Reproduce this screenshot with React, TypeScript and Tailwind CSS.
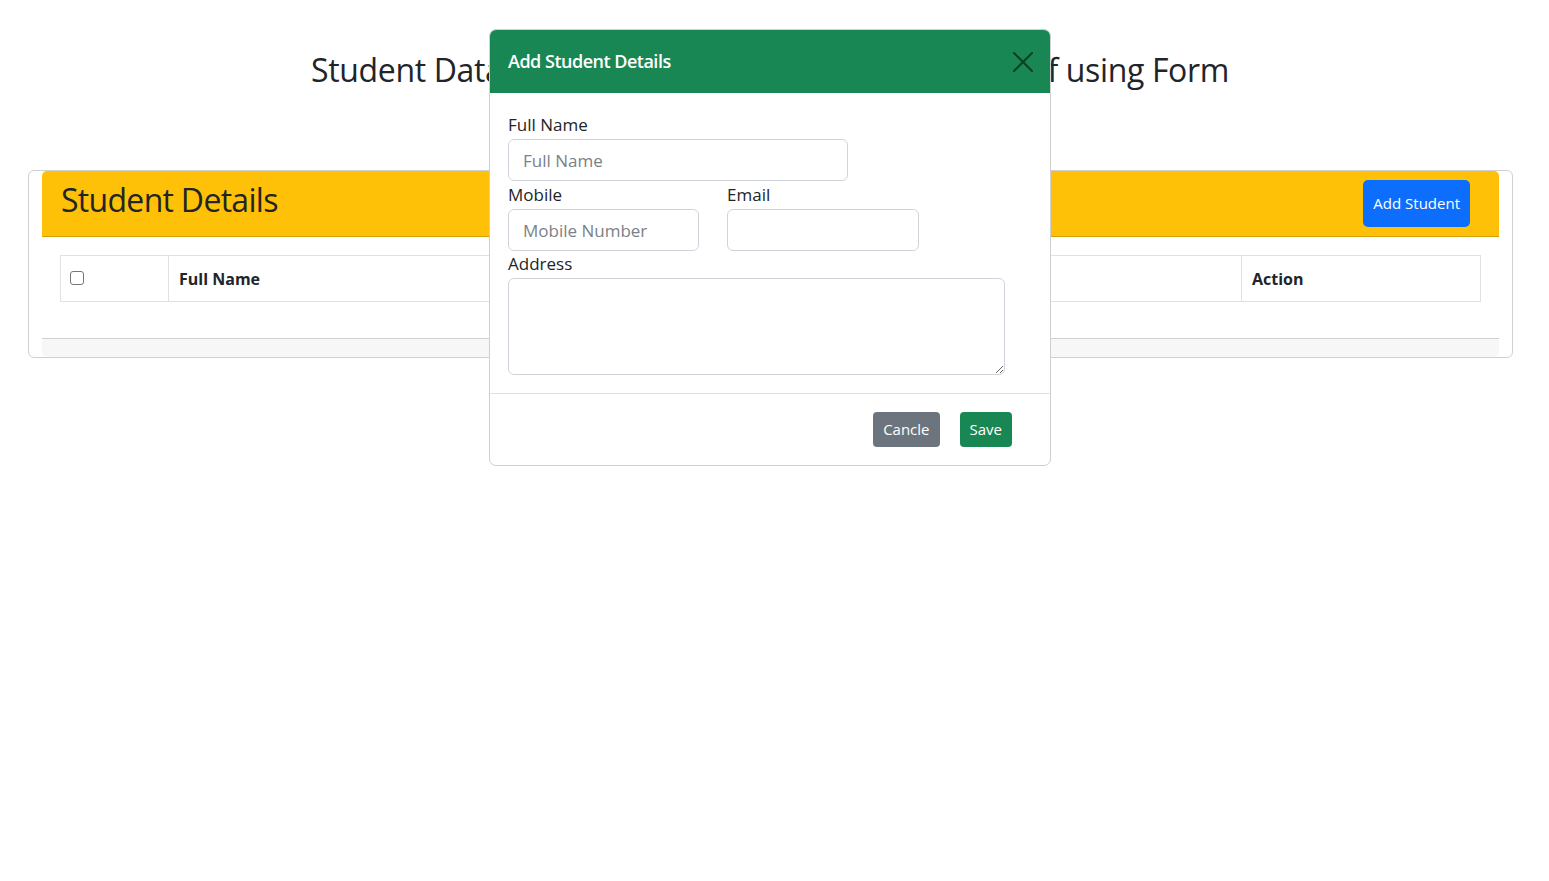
import React from "react";

const font = { fontFamily: '"Open Sans", "Noto Sans", sans-serif' };

function CloseIcon() {
  return (
    <svg width="20" height="20" viewBox="0 0 20 20" fill="none">
      <path d="M1 1L19 19M19 1L1 19" stroke="#0d3f27" strokeWidth="2" strokeLinecap="square" />
    </svg>
  );
}

function StudentTable() {
  const cols = [
    { label: "Full Name", w: "w-[372px]" },
    { label: "Mobile", w: "w-[180px]" },
    { label: "Email", w: "w-[160px]" },
    { label: "Address", w: "w-[361px]" },
    { label: "Action", w: "" },
  ];
  return (
    <table className="w-full table-fixed border-collapse">
      <thead>
        <tr className="h-[46px]">
          <th className="w-[108px] border border-[#dee2e6] px-[9px] text-left align-middle">
            <span className="block h-[14px] w-[14px] -translate-y-[1px] rounded-[3px] border border-[#767676] bg-white" />
          </th>
          {cols.map((c) => (
            <th
              key={c.label}
              className={`${c.w} border border-[#dee2e6] px-[10px] text-left text-[16px] font-bold text-[#212529]`}
            >
              {c.label}
            </th>
          ))}
        </tr>
      </thead>
    </table>
  );
}

function AddStudentModal() {
  return (
    <div className="absolute left-[489px] top-[29px] w-[562px] overflow-hidden rounded-[7px] border border-[#cfcfcf] bg-white">
      <div className="flex h-[63px] items-center justify-between bg-[#198754] pl-[18px] pr-[17px]">
        <h5 className="text-[18px] font-semibold tracking-[-0.5px] text-white">Add Student Details</h5>
        <button className="flex h-[20px] w-[20px] items-center justify-center">
          <CloseIcon />
        </button>
      </div>

      <div className="flex flex-col px-[18px] pb-[18px] pt-[20px] text-[17px] text-[#212529]">
        <label className="leading-[24px]">Full Name</label>
        <input
          placeholder="Full Name"
          className="mt-[2px] h-[42px] w-[340px] rounded-[6px] border border-[#ced4da] px-[14px] text-[17px] placeholder:text-[#7b8188]"
        />
        <div className="mt-[2px] flex gap-[28px]">
          <div className="flex flex-col">
            <label className="leading-[24px]">Mobile</label>
            <input
              placeholder="Mobile Number"
              className="mt-[2px] h-[42px] w-[191px] rounded-[6px] border border-[#ced4da] px-[14px] text-[17px] placeholder:text-[#7b8188]"
            />
          </div>
          <div className="flex flex-col">
            <label className="leading-[24px]">Email</label>
            <input className="mt-[2px] h-[42px] w-[192px] rounded-[6px] border border-[#ced4da] px-[14px] text-[17px]" />
          </div>
        </div>
        <label className="mt-[1px] leading-[24px]">Address</label>
        <textarea className="mt-[2px] block h-[97px] w-[497px] rounded-[6px] border border-[#ced4da] px-[14px] py-[6px]" />
      </div>

      <div className="flex justify-end gap-[20px] border-t border-[#dee2e6] pb-[18px] pr-[38px] pt-[18px]">
        <button className="h-[35px] rounded-[4px] bg-[#6c757d] px-[10px] text-[15px] text-white">Cancle</button>
        <button className="h-[35px] rounded-[4px] bg-[#198754] px-[10px] text-[15px] text-white">Save</button>
      </div>
    </div>
  );
}

export default function App() {
  return (
    <div className="relative min-h-[881px] bg-white text-[#212529]" style={font}>
      <h2 className="pr-[9px] pt-[50px] text-center text-[32px] font-medium leading-[40px] tracking-[-0.35px]">
        Student Data Add, Update, Delete, Show in Table of using Form
      </h2>

      <div className="ml-[28px] mt-[80px] w-[1485px] rounded-[6px] border border-[#d0d0d0] px-[13px]">
        <div className="flex h-[66px] items-center justify-between rounded-t-[5px] border-b border-[#d4a106] bg-[#ffc107] pl-[19px] pr-[29px]">
          <h2 className="mb-[8px] text-[32px] font-medium tracking-[-0.7px] text-[#212529]">Student Details</h2>
          <button className="h-[47px] rounded-[5px] bg-[#0d6efd] px-[10px] text-[15px] text-white">Add Student</button>
        </div>
        <div className="px-[18px] pb-[36px] pt-[18px]">
          <StudentTable />
        </div>
        <div className="h-[19px] rounded-b-[5px] border-t border-[#d0d0d0] bg-[#f7f7f7]" />
      </div>

      <AddStudentModal />
    </div>
  );
}
